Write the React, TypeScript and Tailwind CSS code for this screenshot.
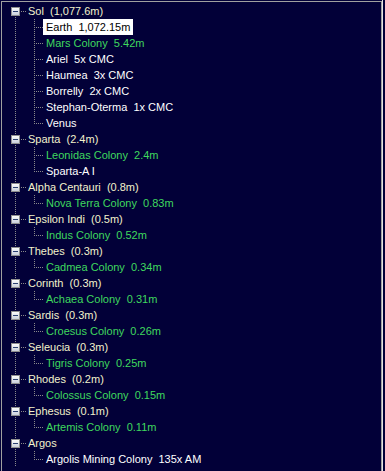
import React from 'react';

type Kind = 'plain' | 'colony';

interface Leaf {
  label: string;
  kind: Kind;
  selected?: boolean;
}

interface Branch {
  label: string;
  children: Leaf[];
}

const tree: Branch[] = [
  {
    label: 'Sol  (1,077.6m)',
    children: [
      { label: 'Earth  1,072.15m', kind: 'plain', selected: true },
      { label: 'Mars Colony  5.42m', kind: 'colony' },
      { label: 'Ariel  5x CMC', kind: 'plain' },
      { label: 'Haumea  3x CMC', kind: 'plain' },
      { label: 'Borrelly  2x CMC', kind: 'plain' },
      { label: 'Stephan-Oterma  1x CMC', kind: 'plain' },
      { label: 'Venus', kind: 'plain' },
    ],
  },
  {
    label: 'Sparta  (2.4m)',
    children: [
      { label: 'Leonidas Colony  2.4m', kind: 'colony' },
      { label: 'Sparta-A I', kind: 'plain' },
    ],
  },
  { label: 'Alpha Centauri  (0.8m)', children: [{ label: 'Nova Terra Colony  0.83m', kind: 'colony' }] },
  { label: 'Epsilon Indi  (0.5m)', children: [{ label: 'Indus Colony  0.52m', kind: 'colony' }] },
  { label: 'Thebes  (0.3m)', children: [{ label: 'Cadmea Colony  0.34m', kind: 'colony' }] },
  { label: 'Corinth  (0.3m)', children: [{ label: 'Achaea Colony  0.31m', kind: 'colony' }] },
  { label: 'Sardis  (0.3m)', children: [{ label: 'Croesus Colony  0.26m', kind: 'colony' }] },
  { label: 'Seleucia  (0.3m)', children: [{ label: 'Tigris Colony  0.25m', kind: 'colony' }] },
  { label: 'Rhodes  (0.2m)', children: [{ label: 'Colossus Colony  0.15m', kind: 'colony' }] },
  { label: 'Ephesus  (0.1m)', children: [{ label: 'Artemis Colony  0.11m', kind: 'colony' }] },
  { label: 'Argos', children: [{ label: 'Argolis Mining Colony  135x AM', kind: 'plain' }] },
];

const LINE = '#8a8a8a';

// connector + expand box for a top-level node
function RootGlyph({ first }: { first: boolean }) {
  return (
    <svg width="24" height="16" className="shrink-0" shapeRendering="crispEdges">
      <defs>
        <linearGradient id="box" x1="0" y1="0" x2="0" y2="1">
          <stop offset="0" stopColor="#ffffff" />
          <stop offset="1" stopColor="#c6cdd8" />
        </linearGradient>
      </defs>
      <line x1="13.5" y1={first ? 12 : 0} x2="13.5" y2="16" stroke={LINE} strokeDasharray="1 1" />
      <line x1="19" y1="8.5" x2="25" y2="8.5" stroke={LINE} strokeDasharray="1 1" />
      <rect x="9.5" y="4.5" width="8" height="8" fill="url(#box)" stroke="#8f8f8f" />
      <line x1="11" y1="8.5" x2="16" y2="8.5" stroke="#2a3f6f" />
    </svg>
  );
}

// connectors for a child node
function ChildGlyph({ last }: { last: boolean }) {
  return (
    <svg width="41" height="16" className="shrink-0" shapeRendering="crispEdges">
      <line x1="13.5" y1="0" x2="13.5" y2="16" stroke={LINE} strokeDasharray="1 1" />
      <line x1="32.5" y1="0" x2="32.5" y2={last ? 9 : 16} stroke={LINE} strokeDasharray="1 1" />
      <line x1="34" y1="8.5" x2="41" y2="8.5" stroke={LINE} strokeDasharray="1 1" />
    </svg>
  );
}

function RootRow({ label, first }: { label: string; first: boolean }) {
  return (
    <div className="h-[16px] flex items-center">
      <RootGlyph first={first} />
      <span className="px-[2px] leading-[16px] text-[#f2f2cc] whitespace-pre">{label}</span>
    </div>
  );
}

function ChildRow({ leaf, last }: { leaf: Leaf; last: boolean }) {
  const color = leaf.selected ? 'text-black bg-white' : leaf.kind === 'colony' ? 'text-[#3fd85e]' : 'text-white';
  return (
    <div className="h-[16px] flex items-center">
      <ChildGlyph last={last} />
      <span className={`px-[3px] h-[16px] leading-[16px] whitespace-pre ${color}`}>{leaf.label}</span>
    </div>
  );
}

export default function App() {
  return (
    <div
      className="w-[385px] h-[471px] overflow-hidden bg-[#020038] flex text-[11px]"
      style={{ fontFamily: '"Liberation Sans", Arial, sans-serif' }}
    >
      <div className="ml-[1px] mt-[1px] w-[381px] h-[470px] border-l border-t border-r border-[#a0a0a0] pt-[1px]">
        {tree.map((branch, bi) => (
          <div key={branch.label}>
            <RootRow label={branch.label} first={bi === 0} />
            {branch.children.map((leaf, li) => (
              <ChildRow key={leaf.label} leaf={leaf} last={li === branch.children.length - 1} />
            ))}
          </div>
        ))}
      </div>
      <div className="w-[1px] h-full bg-[#e4e4e4]" />
    </div>
  );
}
